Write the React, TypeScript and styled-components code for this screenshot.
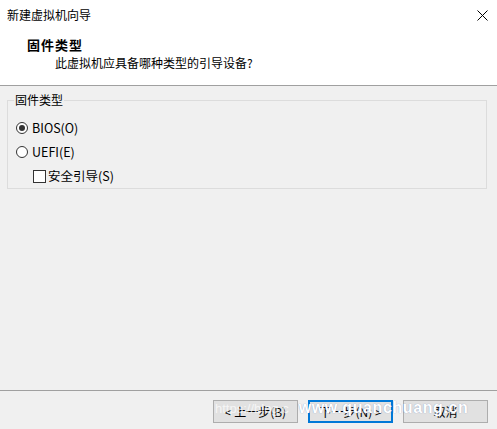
import React from "react";
import styled, { createGlobalStyle } from "styled-components";

const Global = createGlobalStyle`
  html, body { margin: 0; padding: 0; background: #f0f0f0; }
  body { font-family: "Noto Sans CJK SC", "Noto Sans", sans-serif; font-size: 12px; color: #000; }
  * { box-sizing: border-box; }
`;

const Window = styled.div`
  position: relative;
  width: 497px;
  height: 429px;
  display: flex;
  flex-direction: column;
  background: #f0f0f0;
  overflow: hidden;
`;

const Header = styled.div`
  background: #fff;
  height: 86px;
  border-bottom: 1px solid #a0a0a0;
  display: flex;
  flex-direction: column;
`;

const TitleBar = styled.div`
  height: 30px;
  display: flex;
  align-items: center;
  justify-content: space-between;
  padding: 0 9px 0 7px;
`;

const TitleText = styled.span`
  font-size: 12px;
  line-height: 16px;
  color: #000;
`;

const CloseIcon = styled.svg`
  width: 11px;
  height: 11px;
  display: block;
`;

const PageTitle = styled.div`
  font-size: 13px;
  font-weight: bold;
  letter-spacing: 1px;
  line-height: 16px;
  padding-left: 27px;
  margin-top: 7px;
`;

const PageSub = styled.div`
  font-size: 12px;
  line-height: 16px;
  padding-left: 55px;
  margin-top: 2px;
`;

const Body = styled.div`
  flex: 1;
  padding: 6px 10px 0 7px;
`;

const Group = styled.fieldset`
  margin: 0;
  border: 1px solid #dcdcdc;
  padding: 8px 0 0 8px;
  height: 97px;
  display: flex;
  flex-direction: column;
`;

const Legend = styled.legend`
  font-size: 12px;
  line-height: 16px;
  padding: 0 1px;
  margin-left: -2px;
`;

const Row = styled.label<{ $indent?: number }>`
  display: flex;
  align-items: center;
  height: 24px;
  margin-left: ${(p) => p.$indent ?? 0}px;
  font-size: 12.5px;
  line-height: 16px;
`;

const RadioCircle = styled.span<{ $checked?: boolean }>`
  width: 12px;
  height: 12px;
  border-radius: 50%;
  border: 1px solid #333;
  background: #fff;
  display: inline-flex;
  align-items: center;
  justify-content: center;
  margin-right: 4px;
  &::after {
    content: "";
    width: 6px;
    height: 6px;
    border-radius: 50%;
    background: ${(p) => (p.$checked ? "#333" : "transparent")};
  }
`;

const CheckBox = styled.span`
  width: 13px;
  height: 13px;
  border: 1px solid #333;
  background: #fff;
  display: inline-block;
  margin-right: 2px;
`;

const Footer = styled.div`
  height: 39px;
  border-top: 1px solid #a0a0a0;
  display: flex;
  justify-content: flex-end;
  gap: 10px;
  padding: 9px 9px 0 0;
`;

const Button = styled.div<{ $default?: boolean }>`
  width: 85px;
  height: 23px;
  background: #e1e1e1;
  border: ${(p) => (p.$default ? "2px solid #0078d7" : "1px solid #adadad")};
  display: flex;
  align-items: center;
  justify-content: center;
  font-size: 12px;
  line-height: 16px;
  color: #000;
`;

const Watermark = styled.div`
  position: absolute;
  left: 215px;
  top: 399px;
  display: flex;
  align-items: baseline;
  pointer-events: none;
  white-space: nowrap;
`;

const WmSmall = styled.span`
  font-family: "Liberation Sans", Arial, sans-serif;
  font-size: 13px;
  color: rgba(255, 255, 255, 0.7);
  margin-right: 10px;
`;

const WmBig = styled.span`
  font-family: "Liberation Sans", Arial, sans-serif;
  font-weight: bold;
  font-size: 16px;
  letter-spacing: 0.6px;
  color: #fff;
  text-shadow: 0 0 1px rgba(60, 90, 160, 0.6);
`;

export default function App() {
  return (
    <>
      <Global />
      <Window>
        <Header>
          <TitleBar>
            <TitleText>新建虚拟机向导</TitleText>
            <CloseIcon viewBox="0 0 11 11">
              <path d="M0.5 0.5 L10.5 10.5 M10.5 0.5 L0.5 10.5" stroke="#000" strokeWidth="1" fill="none" />
            </CloseIcon>
          </TitleBar>
          <PageTitle>固件类型</PageTitle>
          <PageSub>此虚拟机应具备哪种类型的引导设备?</PageSub>
        </Header>
        <Body>
          <Group>
            <Legend>固件类型</Legend>
            <Row>
              <RadioCircle $checked />
              BIOS(O)
            </Row>
            <Row>
              <RadioCircle />
              UEFI(E)
            </Row>
            <Row $indent={17}>
              <CheckBox />
              安全引导(S)
            </Row>
          </Group>
        </Body>
        <Footer>
          <Button>&lt; 上一步(B)</Button>
          <Button $default>下一步(N) &gt;</Button>
          <Button>取消</Button>
        </Footer>
        <Watermark>
          <WmSmall>https://blog.c</WmSmall>
          <WmBig>www.quanchuang.cn</WmBig>
        </Watermark>
      </Window>
    </>
  );
}
